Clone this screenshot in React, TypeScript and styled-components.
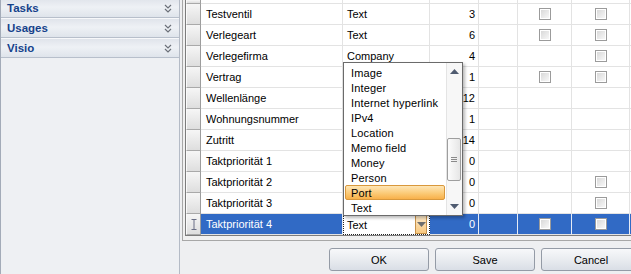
import styled, { createGlobalStyle } from "styled-components";

const GlobalStyle = createGlobalStyle`
  html, body {
    margin: 0;
    padding: 0;
    width: 631px;
    height: 274px;
    overflow: hidden;
    background: #eeeff1;
  }
  body {
    font-family: "Liberation Sans", Arial, sans-serif;
  }
  * { box-sizing: border-box; }
`;

// layout shell
const Shell = styled.div`
  display: flex;
  width: 639px;
  height: 274px;
`;

const SidePanel = styled.aside`
  flex: none;
  width: 180px;
  border-left: 1px solid #a3abb8;
  border-right: 1px solid #b4bbc6;
  background: #eef0f3;
  overflow: hidden;
`;

const NavList = styled.div`
  margin-top: -2px;
`;

const NavHeader = styled.div`
  height: 20px;
  display: flex;
  align-items: center;
  justify-content: space-between;
  padding: 0 7px 0 6px;
  border-top: 1px solid #f7f8fa;
  border-bottom: 1px solid #b7bfcb;
  background: linear-gradient(#e0e4eb, #eef1f5 45%, #dfe4eb);
  color: #15428b;
  font-size: 11.5px;
  font-weight: bold;
`;

const Main = styled.div`
  flex: 1;
  display: flex;
  flex-direction: column;
  padding-left: 2px;
`;

const GridFrame = styled.div`
  border: 1px solid #a7a7a7;
  border-top: none;
  padding: 0 2px 4px 2px;
  background: #f0f0f0;
`;

const GridBody = styled.div`
  position: relative;
  border: 1px solid #7c7c7c;
  border-top: none;
  background: #fff;
`;

const Row = styled.div<{ $h?: number }>`
  display: grid;
  grid-template-columns: 15px 142px 87px 49px 39px 54px 58px 1fr;
  height: ${(p) => p.$h ?? 21}px;
`;

const RowHeader = styled.div`
  display: flex;
  align-items: center;
  justify-content: center;
  background: linear-gradient(#f6f6f6, #dedede);
  border-right: 1px solid #9c9c9c;
  border-bottom: 1px solid #a9a9a9;
  border-left: 1px solid #fafafa;
`;

const Cell = styled.div<{ $sel?: boolean; $align?: string; $pad?: number }>`
  display: flex;
  align-items: center;
  justify-content: ${(p) => p.$align ?? "flex-start"};
  padding: 0 ${(p) => p.$pad ?? 3}px 0 ${(p) => p.$pad ?? 3}px;
  font-size: 11px;
  white-space: nowrap;
  overflow: hidden;
  color: ${(p) => (p.$sel ? "#fff" : "#000")};
  background: ${(p) => (p.$sel ? "#316ac5" : "#fff")};
  border-right: 1px solid ${(p) => (p.$sel ? "#e6ebf5" : "#e3e3e3")};
  border-bottom: 1px solid #e3e3e3;
`;

const EditorCell = styled.div`
  display: flex;
  align-items: center;
  justify-content: space-between;
  padding: 0 2px 0 3px;
  font-size: 11px;
  background: #fff;
  border: 1px dotted #222;
`;

const DropButton = styled.span`
  width: 12px;
  height: 19px;
  display: flex;
  align-items: center;
  justify-content: center;
  border: 1px solid #c7924a;
  background: linear-gradient(#fdeacb, #f9c97f);
`;

const CheckBox = styled.span`
  width: 12px;
  height: 12px;
  border: 1px solid #9b9b9b;
  background: linear-gradient(135deg, #d5d5d5, #fbfbfb);
  box-shadow: inset 0 0 0 1px #fff;
`;

// dropdown overlay
const DropList = styled.div`
  position: absolute;
  left: 157px;
  top: 62px;
  width: 120px;
  display: flex;
  border: 1px solid #6b6b6b;
  background: #fff;
  box-shadow: 2px 2px 3px rgba(0, 0, 0, 0.28);
`;

const Items = styled.div`
  flex: 1;
  padding: 2px 1px 0 1px;
`;

const Item = styled.div<{ $hot?: boolean }>`
  height: 15px;
  display: flex;
  align-items: center;
  padding-left: 5px;
  font-size: 11px;
  letter-spacing: 0.15px;
  color: #000;
  white-space: nowrap;
  border: 1px solid ${(p) => (p.$hot ? "#d9983c" : "transparent")};
  border-radius: 2px;
  background: ${(p) =>
    p.$hot ? "linear-gradient(#fee6b6, #fbc872 60%, #f8b04a)" : "none"};
`;

const ScrollBar = styled.div`
  width: 16px;
  flex: none;
  display: flex;
  flex-direction: column;
  border-left: 1px solid #e4e4e4;
  background: #f7f7f7;
`;

const ScrollArrow = styled.div`
  height: 17px;
  display: flex;
  align-items: center;
  justify-content: center;
`;

const Track = styled.div`
  flex: 1;
  display: flex;
  flex-direction: column;
`;

const Thumb = styled.div<{ $offset: number }>`
  margin: ${(p) => p.$offset}px 1px 0 0;
  height: 43px;
  display: flex;
  flex-direction: column;
  align-items: center;
  justify-content: center;
  gap: 1px;
  border: 1px solid #9e9e9e;
  border-radius: 2px;
  background: linear-gradient(90deg, #fcfcfc, #e6e6e6);
`;

const Grip = styled.span`
  width: 6px;
  height: 1px;
  background: #8a8a8a;
`;

// buttons
const ButtonBar = styled.div`
  display: flex;
  justify-content: flex-end;
  gap: 6px;
  padding-top: 7px;
`;

const Button = styled.button`
  width: 100px;
  height: 23px;
  border: 1px solid #949ba6;
  border-radius: 3px;
  background: linear-gradient(#f7f8fa, #e9ecf0 50%, #d9dee6);
  font-family: "Liberation Sans", Arial, sans-serif;
  font-size: 11px;
  color: #000;
`;

const Chevrons = () => (
  <svg width="8" height="9" viewBox="0 0 8 9">
    <path d="M1 1l3 3 3-3M1 5l3 3 3-3" fill="none" stroke="#6b7079" strokeWidth="1.2" />
  </svg>
);

const Tri = ({ up, color = "#4f5b70" }: { up?: boolean; color?: string }) => (
  <svg width="9" height="5" viewBox="0 0 9 5">
    <path d={up ? "M0 5L4.5 0L9 5Z" : "M0 0L4.5 5L9 0Z"} fill={color} />
  </svg>
);

const IBeam = () => (
  <svg width="6" height="11" viewBox="0 0 6 11">
    <path d="M0.5 0.5h5M3 0.5v10M0.5 10.5h5" fill="none" stroke="#6a6f86" strokeWidth="1" />
  </svg>
);

type RowData = {
  name: string;
  type?: string;
  num: number;
  c1?: boolean;
  c2?: boolean;
  sel?: boolean;
};

const rows: RowData[] = [
  { name: "Testventil", type: "Text", num: 3, c1: true, c2: true },
  { name: "Verlegeart", type: "Text", num: 6, c1: true, c2: true },
  { name: "Verlegefirma", type: "Company", num: 4, c2: true },
  { name: "Vertrag", num: 1, c1: true, c2: true },
  { name: "Wellenlänge", num: 12 },
  { name: "Wohnungsnummer", num: 1 },
  { name: "Zutritt", num: 14 },
  { name: "Taktpriorität 1", num: 0 },
  { name: "Taktpriorität 2", num: 0, c2: true },
  { name: "Taktpriorität 3", num: 0, c2: true },
  { name: "Taktpriorität 4", type: "Text", num: 0, c1: true, c2: true, sel: true },
];

const options = [
  "Image",
  "Integer",
  "Internet hyperlink",
  "IPv4",
  "Location",
  "Memo field",
  "Money",
  "Person",
  "Port",
  "Text",
];

const App = () => {
  return (
    <>
      <GlobalStyle />
      <Shell>
        <SidePanel>
          <NavList>
            {["Tasks", "Usages", "Visio"].map((t) => (
              <NavHeader key={t}>
                <span>{t}</span>
                <Chevrons />
              </NavHeader>
            ))}
          </NavList>
        </SidePanel>

        <Main>
          <GridFrame>
            <GridBody>
              <Row $h={4}>
                <RowHeader />
                <Cell />
                <Cell />
                <Cell />
                <Cell />
                <Cell />
                <Cell />
                <Cell />
              </Row>
              {rows.map((r) => (
                <Row key={r.name}>
                  <RowHeader>{r.sel && <IBeam />}</RowHeader>
                  <Cell $sel={r.sel} $pad={5}>{r.name}</Cell>
                  {r.sel ? (
                    <EditorCell>
                      <span>{r.type}</span>
                      <DropButton>
                        <Tri color="#6e6e6e" />
                      </DropButton>
                    </EditorCell>
                  ) : (
                    <Cell $pad={4}>{r.type}</Cell>
                  )}
                  <Cell $sel={r.sel} $align="flex-end">{r.num}</Cell>
                  <Cell $sel={r.sel} />
                  <Cell $sel={r.sel} $align="center">{r.c1 && <CheckBox />}</Cell>
                  <Cell $sel={r.sel} $align="center">{r.c2 && <CheckBox />}</Cell>
                  <Cell $sel={r.sel} />
                </Row>
              ))}

              <DropList>
                <Items>
                  {options.map((o) => (
                    <Item key={o} $hot={o === "Port"}>
                      {o}
                    </Item>
                  ))}
                </Items>
                <ScrollBar>
                  <ScrollArrow>
                    <Tri up />
                  </ScrollArrow>
                  <Track>
                    <Thumb $offset={58}>
                      <Grip />
                      <Grip />
                      <Grip />
                    </Thumb>
                  </Track>
                  <ScrollArrow>
                    <Tri />
                  </ScrollArrow>
                </ScrollBar>
              </DropList>
            </GridBody>
          </GridFrame>

          <ButtonBar>
            <Button>OK</Button>
            <Button>Save</Button>
            <Button>Cancel</Button>
          </ButtonBar>
        </Main>
      </Shell>
    </>
  );
};

export default App;
